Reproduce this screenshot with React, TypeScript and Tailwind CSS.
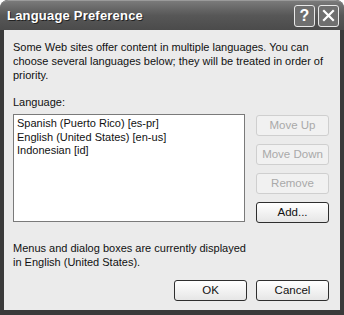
const font = { fontFamily: '"Liberation Sans", Arial, sans-serif' };

const Btn = ({ label, disabled = false, w = 'w-[73px]' }: { label: string; disabled?: boolean; w?: string }) => (
  <button
    className={
      disabled
        ? `${w} h-[21px] rounded-[3px] border border-[#cfcfcf] bg-[#f1f1f1] text-[#a9a9a9] text-[11.5px] leading-none`
        : `${w} h-[21px] rounded-[3px] border border-[#2e2e2e] bg-gradient-to-b from-white to-[#e6e6e6] text-[#111] text-[11.5px] leading-none`
    }
  >
    {label}
  </button>
);

const App = () => {
  return (
    <div className="w-[344px] h-[315px] bg-[#3a3a3a] rounded-t-[8px] flex flex-col overflow-hidden" style={font}>
      {/* title bar */}
      <div className="h-[30px] shrink-0 flex items-center pl-[7px] pr-[5px] bg-gradient-to-b from-[#7a7a7a] via-[#575757] to-[#4b4b4b] rounded-t-[8px] border-t border-[#9a9a9a]">
        <span className="text-white font-bold text-[13px] tracking-[0.2px] [text-shadow:1px_1px_0_#222]">Language Preference</span>
        <div className="ml-auto flex gap-[3px]">
          <div className="w-[21px] h-[22px] rounded-[3px] border border-[#e8e8e8] bg-[#6f6f6f] flex items-center justify-center text-white font-bold text-[16px] leading-none">?</div>
          <div className="w-[21px] h-[22px] rounded-[3px] border border-[#e8e8e8] bg-[#6f6f6f] flex items-center justify-center">
            <svg width="13" height="13" viewBox="0 0 13 13">
              <path d="M2 2 L11 11 M11 2 L2 11" stroke="white" strokeWidth="2.2" strokeLinecap="square" />
            </svg>
          </div>
        </div>
      </div>

      {/* body */}
      <div className="mx-[4px] mb-[5px] flex-1 bg-[#ebebeb] pl-[9px] pr-[11px] pt-[10px] text-[11px] leading-[14px] text-[#111]">
        <p>
          Some Web sites offer content in multiple languages. You can
          <br />
          choose several languages below; they will be treated in order of
          <br />
          priority.
        </p>

        <p className="mt-[13px]">Language:</p>

        <div className="mt-[5px] flex gap-[11px]">
          <div className="w-[232px] h-[108px] bg-white border border-[#7a7a7a] px-[3px] pt-[2px] leading-[13.5px]">
            <div>Spanish (Puerto Rico) [es-pr]</div>
            <div>English (United States) [en-us]</div>
            <div>Indonesian [id]</div>
          </div>
          <div className="flex flex-col gap-[8px] pt-[1px]">
            <Btn label="Move Up" disabled />
            <Btn label="Move Down" disabled />
            <Btn label="Remove" disabled />
            <Btn label="Add..." />
          </div>
        </div>

        <p className="mt-[18px]">
          Menus and dialog boxes are currently displayed
          <br />
          in English (United States).
        </p>

        <div className="mt-[11px] flex justify-end gap-[9px]">
          <Btn label="OK" />
          <Btn label="Cancel" />
        </div>
      </div>
    </div>
  );
};

export default App;
